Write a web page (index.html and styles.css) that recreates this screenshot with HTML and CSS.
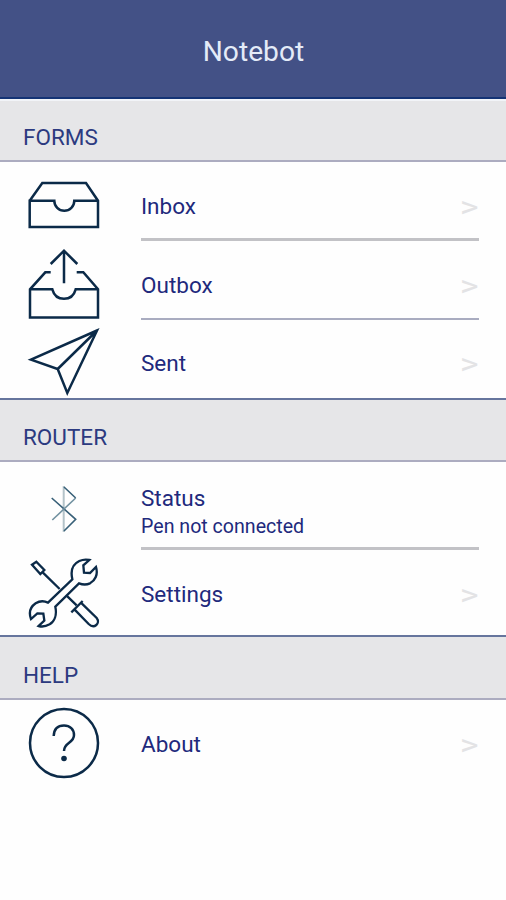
FILE: index.html
```
<!DOCTYPE html>
<html lang="en">

<head>
  <meta charset="UTF-8">
  <meta name="viewport" content="width=device-width, initial-scale=1.0">
  <title>Notebot</title>
  <link rel="stylesheet" href="styles.css">
</head>

<body>
  <header class="header">
    <h1 class="header-title">Notebot</h1>
  </header>

  <h2 class="section-title first">FORMS</h2>
  <ul class="menu">
    <li class="menu-item inbox">
      <svg class="icon" width="76" height="79" viewBox="0 0 76 79">
        <path d="M3.7 38.7L16.3 21H60L72 38.7V65H3.7V38.7H28.3A10 10 0 0 0 48.3 38.7H72" />
      </svg>
      <div class="item-body">
        <span class="item-label">Inbox</span>
        <span class="arrow">&gt;</span>
      </div>
    </li>
    <li class="menu-item outbox">
      <svg class="icon" width="76" height="79" viewBox="0 0 76 79">
        <path d="M24.7 31.3H19.3L4 48.3V76.5H72V48.3L57.3 31.3H50.7" />
        <path d="M4 48.3H26.3C28 54.5 32 57.8 38 57.8S48 54.5 49.7 48.3H72" />
        <path d="M24.7 23L38 9.7L51.3 23M38 9.7V42.3" />
      </svg>
      <div class="item-body">
        <span class="item-label">Outbox</span>
        <span class="arrow">&gt;</span>
      </div>
    </li>
    <li class="menu-item sent">
      <svg class="icon" width="76" height="78" viewBox="0 0 76 78">
        <path d="M71 10.5L5 39.7L31.7 49L41.3 73Z M71 10.5L31.7 49" />
      </svg>
      <div class="item-body">
        <span class="item-label">Sent</span>
        <span class="arrow">&gt;</span>
      </div>
    </li>
  </ul>

  <h2 class="section-title">ROUTER</h2>
  <ul class="menu">
    <li class="menu-item status">
      <svg class="icon bluetooth" width="76" height="88" viewBox="0 0 76 88">
        <path class="faint" d="M37.7 24V70" />
        <path d="M25.7 36L49.7 57.3L38 69M38 25L49.7 36" />
        <path class="mid" d="M49.7 36L26.3 58" />
      </svg>
      <div class="item-body">
        <div class="item-text">
          <span class="item-label">Status</span>
          <span class="item-note">Pen not connected</span>
        </div>
      </div>
    </li>
    <li class="menu-item settings">
      <svg class="icon tools" width="76" height="85" viewBox="33 0 228 255">
        <path d="M99 158L172 88C166 62 174 42 193 33C204 28 214 28 223 30L205 46L207 68L225 69L243 51C250 74 240 92 225 100C214 105 202 104 192 100L121 170C126 194 119 214 104 223C93 229 82 231 71 228L88 212L85 191L67 190L48 207C41 188 46 171 62 160C73 153 87 152 99 158Z" />
        <path d="M51 44L64 35L88 60L76 72ZM83 67L134 117M154 136L185 166" />
        <path d="M169 187L203 153M179 179L221 222C238 238 257 220 245 204L200 160" />
      </svg>
      <div class="item-body">
        <span class="item-label">Settings</span>
        <span class="arrow">&gt;</span>
      </div>
    </li>
  </ul>

  <h2 class="section-title last">HELP</h2>
  <ul class="menu">
    <li class="menu-item about">
      <svg class="icon" width="76" height="86" viewBox="0 0 76 86">
        <circle cx="38" cy="43" r="34" />
        <path d="M27.7 36C28 29 32 25.500 38 25.500C44 25.500 48 29.500 48 35C48 43.500 38 42 38 51" />
        <circle class="dot" cx="38" cy="58.500" r="2.800" />
      </svg>
      <div class="item-body">
        <span class="item-label">About</span>
        <span class="arrow">&gt;</span>
      </div>
    </li>
  </ul>
</body>

</html>
```
FILE: styles.css
```
* {
  box-sizing: border-box;
}

body {
  margin: 0;
  font-family: Roboto, "Liberation Sans", sans-serif;
  background-color: #fefefe;
  color: #21297c;
}

.header {
  display: flex;
  align-items: center;
  justify-content: center;
  height: 99px;
  padding: 6px 0 0 1px;
  background-color: #435186;
  border-bottom: 2px solid #143375;
}

.header-title {
  margin: 0;
  font-size: 28.2px;
  font-weight: 400;
  color: #e4ebf8;
}

.section-title {
  display: flex;
  align-items: center;
  height: 64px;
  margin: 0;
  padding: 14px 23px 0;
  font-size: 22.5px;
  font-weight: 400;
  color: #2c3a80;
  background-color: #e6e6e8;
  border-top: 2px solid #66759d;
  border-bottom: 2px solid #acacc0;
}

.section-title.first {
  height: 63px;
  padding-top: 12px;
  border-top-color: #f2f4f8;
}

.section-title.last {
  height: 65px;
}

.menu {
  margin: 0;
  padding: 0 27px 0 26px;
  list-style: none;
}

.menu-item {
  display: flex;
  height: 79px;
}

.icon {
  flex: none;
  margin-right: 39px;
  fill: none;
  stroke: #0b2a48;
  stroke-width: 2.5;
}

.icon .dot {
  fill: #0b2a48;
  stroke: none;
}

.bluetooth {
  stroke: #386078;
  stroke-width: 1.6;
}

.bluetooth .mid {
  stroke: #7191a0;
}

.bluetooth .faint {
  stroke: #b4c3c9;
  stroke-width: 2;
}

.tools {
  stroke-width: 7;
}

.item-body {
  display: flex;
  flex: 1;
  align-items: center;
  justify-content: space-between;
  padding-top: 11px;
}

.inbox .item-body,
.status .item-body {
  border-bottom: 3px solid #c2c2c6;
}

.outbox .item-body {
  border-bottom: 2px solid #a9acc0;
}

.sent,
.about .item-body {
  height: 78px;
}

.sent .item-body {
  padding-top: 8px;
}

.status {
  height: 88px;
}

.status .item-body {
  padding-top: 18px;
}

.settings {
  height: 85px;
}

.settings .item-body {
  padding-top: 3px;
}

.about {
  height: 86px;
}

.about .item-body {
  padding-top: 9px;
}

.item-label {
  font-size: 22.5px;
  line-height: 26px;
}

.item-text {
  display: flex;
  flex-direction: column;
}

.item-note {
  font-size: 19.6px;
  line-height: 31px;
}

.arrow {
  padding-top: 2px;
  font-size: 30px;
  line-height: 30px;
  color: #e3e3e5;
  transform: scaleX(1.2);
  transform-origin: right;
}
```
